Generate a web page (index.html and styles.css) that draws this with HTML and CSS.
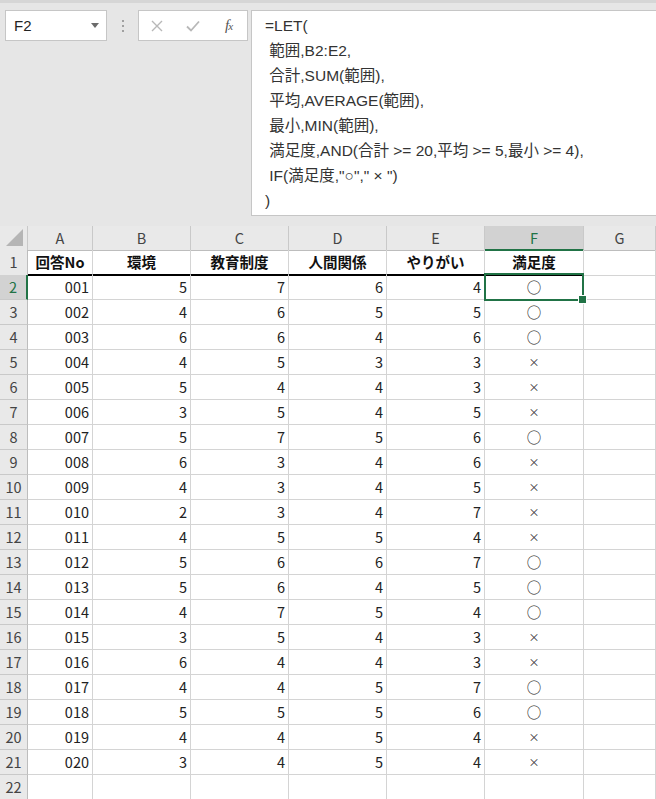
FILE: index.html
```html
<!DOCTYPE html>
<html lang="ja">
<head>
<meta charset="utf-8">
<title>LET関数</title>
<link rel="stylesheet" href="styles.css">
</head>
<body>
<div class="app">
  <div class="topbar">
    <div class="namebox">
      <span class="name">F2</span>
      <svg class="dd" width="8" height="5" viewBox="0 0 8 5"><path d="M0 0h8L4 5z" fill="#6b6b6b"/></svg>
    </div>
    <div class="grip"><i></i><i></i><i></i></div>
    <div class="btnbox">
      <svg class="btn" width="12" height="12" viewBox="0 0 12 12"><path d="M1 1L11 11M11 1L1 11" stroke="#b8b8b8" stroke-width="1.4" fill="none"/></svg>
      <svg class="btn" width="14" height="12" viewBox="0 0 14 12"><path d="M1 6.5L5 10.5L13 1.5" stroke="#b8b8b8" stroke-width="1.8" fill="none"/></svg>
      <span class="fx">f<small>x</small></span>
    </div>
    <div class="formula">=LET(
 範囲,B2:E2,
 合計,SUM(範囲),
 平均,AVERAGE(範囲),
 最小,MIN(範囲),
 満足度,AND(合計 &gt;= 20,平均 &gt;= 5,最小 &gt;= 4),
 IF(満足度,"○"," × ")
)</div>
  </div>

  <div class="sheet">
    <div class="row colhead">
      <div class="corner"><svg width="18" height="18" viewBox="0 0 18 18"><path d="M17 0V17H0z" fill="#b5b5b5"/></svg></div>
      <div class="ch">A</div><div class="ch">B</div><div class="ch">C</div><div class="ch">D</div><div class="ch">E</div><div class="ch sel">F</div><div class="ch">G</div>
    </div>
    <div class="row r1">
      <div class="rh">1</div>
      <div class="c hd">回答No</div><div class="c hd">環境</div><div class="c hd">教育制度</div><div class="c hd">人間関係</div><div class="c hd">やりがい</div><div class="c hd">満足度</div><div class="c g"></div>
    </div>
    <div class="row"><div class="rh sel">2</div><div class="c n">001</div><div class="c n">5</div><div class="c n">7</div><div class="c n">6</div><div class="c n">4</div><div class="c m active">○</div><div class="c"></div></div>
    <div class="row"><div class="rh">3</div><div class="c n">002</div><div class="c n">4</div><div class="c n">6</div><div class="c n">5</div><div class="c n">5</div><div class="c m">○</div><div class="c"></div></div>
    <div class="row"><div class="rh">4</div><div class="c n">003</div><div class="c n">6</div><div class="c n">6</div><div class="c n">4</div><div class="c n">6</div><div class="c m">○</div><div class="c"></div></div>
    <div class="row"><div class="rh">5</div><div class="c n">004</div><div class="c n">4</div><div class="c n">5</div><div class="c n">3</div><div class="c n">3</div><div class="c m x">×</div><div class="c"></div></div>
    <div class="row"><div class="rh">6</div><div class="c n">005</div><div class="c n">5</div><div class="c n">4</div><div class="c n">4</div><div class="c n">3</div><div class="c m x">×</div><div class="c"></div></div>
    <div class="row"><div class="rh">7</div><div class="c n">006</div><div class="c n">3</div><div class="c n">5</div><div class="c n">4</div><div class="c n">5</div><div class="c m x">×</div><div class="c"></div></div>
    <div class="row"><div class="rh">8</div><div class="c n">007</div><div class="c n">5</div><div class="c n">7</div><div class="c n">5</div><div class="c n">6</div><div class="c m">○</div><div class="c"></div></div>
    <div class="row"><div class="rh">9</div><div class="c n">008</div><div class="c n">6</div><div class="c n">3</div><div class="c n">4</div><div class="c n">6</div><div class="c m x">×</div><div class="c"></div></div>
    <div class="row"><div class="rh">10</div><div class="c n">009</div><div class="c n">4</div><div class="c n">3</div><div class="c n">4</div><div class="c n">5</div><div class="c m x">×</div><div class="c"></div></div>
    <div class="row"><div class="rh">11</div><div class="c n">010</div><div class="c n">2</div><div class="c n">3</div><div class="c n">4</div><div class="c n">7</div><div class="c m x">×</div><div class="c"></div></div>
    <div class="row"><div class="rh">12</div><div class="c n">011</div><div class="c n">4</div><div class="c n">5</div><div class="c n">5</div><div class="c n">4</div><div class="c m x">×</div><div class="c"></div></div>
    <div class="row"><div class="rh">13</div><div class="c n">012</div><div class="c n">5</div><div class="c n">6</div><div class="c n">6</div><div class="c n">7</div><div class="c m">○</div><div class="c"></div></div>
    <div class="row"><div class="rh">14</div><div class="c n">013</div><div class="c n">5</div><div class="c n">6</div><div class="c n">4</div><div class="c n">5</div><div class="c m">○</div><div class="c"></div></div>
    <div class="row"><div class="rh">15</div><div class="c n">014</div><div class="c n">4</div><div class="c n">7</div><div class="c n">5</div><div class="c n">4</div><div class="c m">○</div><div class="c"></div></div>
    <div class="row"><div class="rh">16</div><div class="c n">015</div><div class="c n">3</div><div class="c n">5</div><div class="c n">4</div><div class="c n">3</div><div class="c m x">×</div><div class="c"></div></div>
    <div class="row"><div class="rh">17</div><div class="c n">016</div><div class="c n">6</div><div class="c n">4</div><div class="c n">4</div><div class="c n">3</div><div class="c m x">×</div><div class="c"></div></div>
    <div class="row"><div class="rh">18</div><div class="c n">017</div><div class="c n">4</div><div class="c n">4</div><div class="c n">5</div><div class="c n">7</div><div class="c m">○</div><div class="c"></div></div>
    <div class="row"><div class="rh">19</div><div class="c n">018</div><div class="c n">5</div><div class="c n">5</div><div class="c n">5</div><div class="c n">6</div><div class="c m">○</div><div class="c"></div></div>
    <div class="row"><div class="rh">20</div><div class="c n">019</div><div class="c n">4</div><div class="c n">4</div><div class="c n">5</div><div class="c n">4</div><div class="c m x">×</div><div class="c"></div></div>
    <div class="row"><div class="rh">21</div><div class="c n">020</div><div class="c n">3</div><div class="c n">4</div><div class="c n">5</div><div class="c n">4</div><div class="c m x">×</div><div class="c"></div></div>
    <div class="row"><div class="rh">22</div><div class="c"></div><div class="c"></div><div class="c"></div><div class="c"></div><div class="c"></div><div class="c"></div><div class="c"></div></div>
  </div>
</div>
</body>
</html>
```

FILE: styles.css
```css
* { box-sizing: border-box; }
html, body { margin: 0; padding: 0; }
body {
  width: 656px;
  height: 799px;
  overflow: hidden;
  background: #ffffff;
  font-family: "Noto Sans CJK JP", "Noto Sans", sans-serif;
  color: #000;
}
.app { width: 656px; }

.topbar {
  height: 226px;
  background: #e6e6e6;
  border-top: 3px solid #d6d6d6;
  display: flex;
  align-items: flex-start;
  padding: 7px 0 0 5px;
}
.namebox {
  width: 102px;
  height: 31px;
  background: #fff;
  border: 1px solid #c6c6c6;
  display: flex;
  align-items: center;
  justify-content: space-between;
  padding: 0 7px 0 8px;
}
.name { font-size: 15px; color: #222; font-family: "Liberation Sans", "Noto Sans", sans-serif; }
.dd { margin-top: -1px; }
.grip {
  width: 31px;
  height: 31px;
  display: flex;
  flex-direction: column;
  align-items: center;
  justify-content: center;
  gap: 3px;
}
.grip i { display: block; width: 2px; height: 2px; background: #a0a0a0; }
.btnbox {
  width: 110px;
  height: 31px;
  background: #fff;
  border: 1px solid #c6c6c6;
  display: flex;
  align-items: center;
  padding: 0 0 0 12px;
}
.btnbox .btn:first-child { margin-right: 23px; }
.btnbox .btn:nth-child(2) { margin-right: 25px; }
.fx {
  font-family: "Liberation Serif", serif;
  font-style: italic;
  font-size: 15px;
  color: #555;
  letter-spacing: -1px;
}
.fx small { font-size: 11px; }
.formula {
  margin-left: 3px;
  flex: 1;
  height: 206px;
  background: #fff;
  border: 1px solid #c6c6c6;
  border-right: none;
  padding: 2px 0 0 13px;
  white-space: pre;
  font-family: "Liberation Sans", "Noto Sans CJK JP", sans-serif;
  font-size: 15.5px;
  line-height: 25px;
  color: #333;
}

.sheet { background: #fff; }
.row {
  display: grid;
  grid-template-columns: 28px 65px 98px 98px 98px 98px 99px 72px;
  height: 25px;
}
.row > div {
  border-right: 1px solid #d4d4d4;
  border-bottom: 1px solid #d4d4d4;
  font-size: 14.5px;
  line-height: 24px;
  white-space: nowrap;
  overflow: visible;
}
.colhead { height: 24px; }
.colhead > div {
  background: #e9e9e9;
  border-right: 1px solid #c9c9c9;
  border-bottom: 1px solid #bdbdbd;
  text-align: center;
  color: #444;
  line-height: 23px;
}
.corner { display: flex; align-items: flex-end; justify-content: flex-end; padding: 0 3px 3px 0; }
.corner svg { display: block; }
.colhead > .sel {
  background: #d2d2d2;
  color: #217346;
  border-bottom: 2px solid #217346;
}
.row > .rh {
  background: #e9e9e9;
  border-right: 1px solid #bdbdbd;
  border-bottom: 1px solid #c9c9c9;
  text-align: center;
  color: #444;
}
.row > .rh.sel {
  background: #d2d2d2;
  color: #217346;
  border-right: 2px solid #217346;
}
.r1 > .hd {
  font-weight: bold;
  text-align: center;
  border-bottom: 2px solid #000;
  color: #111;
}
.c.n { text-align: right; padding-right: 3px; color: #222; }
.c.m { text-align: center; color: #222; }
.c.m.x { font-size: 11px; color: #333; }
.c.active { position: relative; }
.c.active::after {
  content: "";
  position: absolute;
  left: -1px;
  top: -2px;
  right: -1px;
  bottom: -2px;
  border: 2px solid #217346;
}
.c.active::before {
  content: "";
  position: absolute;
  width: 7px;
  height: 7px;
  right: -4px;
  bottom: -5px;
  background: #217346;
  border: 1px solid #fff;
  z-index: 2;
}
```
